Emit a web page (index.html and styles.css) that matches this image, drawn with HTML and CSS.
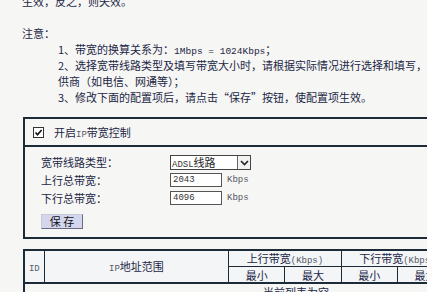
FILE: index.html
```html
<!DOCTYPE html>
<html lang="zh-CN">
<head>
<meta charset="utf-8">
<link rel="stylesheet" href="styles.css">
</head>
<body>
<div class="page">
  <div class="notes">
    <div class="line">生效，反之，则失效。</div>
    <div class="line blank"></div>
    <div class="line">注意：</div>
    <div class="item">1、带宽的换算关系为：<span class="en">1Mbps = 1024Kbps</span>；</div>
    <div class="item">2、选择宽带线路类型及填写带宽大小时，请根据实际情况进行选择和填写，如果有疑问，请联系宽带提</div>
    <div class="item">供商（如电信、网通等）；</div>
    <div class="item">3、修改下面的配置项后，请点击“保存”按钮，使配置项生效。</div>
  </div>

  <div class="box">
    <div class="box-head">
      <span class="check"><svg width="11" height="11" viewBox="0 0 11 11"><rect x="0.5" y="0.5" width="10" height="10" fill="#fff" stroke="#333"/><path d="M2.5 5.5 L4.5 7.8 L8.6 3" fill="none" stroke="#111" stroke-width="1.6"/></svg></span>
      <span class="head-text">开启<span class="en-s">IP</span>带宽控制</span>
    </div>
    <div class="box-body">
      <div class="row">
        <span class="label">宽带线路类型：</span>
        <span class="select"><span class="sel-text"><span class="en-s">ADSL</span>线路</span><span class="sel-arrow"><svg width="9" height="6" viewBox="0 0 9 6"><path d="M1 1 L4.5 4.5 L8 1" fill="none" stroke="#222" stroke-width="1.6"/></svg></span></span>
      </div>
      <div class="row">
        <span class="label">上行总带宽：</span>
        <span class="input">2043</span>
        <span class="unit">Kbps</span>
      </div>
      <div class="row">
        <span class="label">下行总带宽：</span>
        <span class="input">4096</span>
        <span class="unit">Kbps</span>
      </div>
      <div class="btn-row"><span class="btn">保 存</span></div>
    </div>
  </div>

  <table class="grid">
    <colgroup>
      <col class="c-id"><col class="c-ip"><col class="c-n"><col class="c-n"><col class="c-n"><col class="c-n"><col class="c-x"><col class="c-x">
    </colgroup>
    <tr class="top">
      <th rowspan="2"><span class="en-s">ID</span></th>
      <th rowspan="2"><span class="en-s">IP</span>地址范围</th>
      <th colspan="2">上行带宽<span class="en-s">(Kbps)</span></th>
      <th colspan="2">下行带宽<span class="en-s">(Kbps)</span></th>
      <th rowspan="2">启用</th>
      <th rowspan="2">配置</th>
    </tr>
    <tr class="sub">
      <th>最小</th><th>最大</th><th>最小</th><th>最大</th>
    </tr>
    <tr>
      <td colspan="8" class="empty">当前列表为空</td>
    </tr>
  </table>
</div>
</body>
</html>
```
FILE: styles.css
```css
html, body {
  margin: 0;
  padding: 0;
  background: #f6f6f4;
  overflow: hidden;
}
body {
  width: 427px;
  height: 292px;
  font-family: "Noto Sans CJK SC", "Noto Sans", sans-serif;
  font-size: 11px;
  color: #1c2646;
}
.page {
  padding-left: 22px;
  margin-top: -7px;
}
.notes {
  line-height: 16px;
}
.line {
  height: 16px;
  white-space: nowrap;
}
.item {
  height: 16px;
  padding-left: 36px;
  white-space: nowrap;
}
.en {
  font-family: "Liberation Mono", monospace;
  font-size: 9.5px;
  line-height: 1;
}
.en-s {
  font-family: "Liberation Mono", monospace;
  font-size: 9px;
  line-height: 1;
  color: #555a66;
}
.box {
  margin-top: 12px;
  margin-left: 1px;
  width: 430px;
  border: 2px solid #1d2a38;
}
.box-head {
  height: 26px;
  display: flex;
  align-items: center;
  padding-left: 8px;
  border-bottom: 2px solid #1d2a38;
}
.check {
  display: flex;
  width: 11px;
  height: 11px;
  margin-right: 10px;
}
.head-text {
  white-space: nowrap;
}
.box-body {
  padding: 8px 0 8px 16px;
}
.row {
  height: 18px;
  display: flex;
  align-items: flex-start;
}
.label {
  width: 129px;
  line-height: 15px;
  white-space: nowrap;
}
.select {
  width: 79px;
  height: 13px;
  border: 1px solid #444;
  background: #fff;
  display: flex;
  justify-content: space-between;
  align-items: stretch;
}
.sel-text {
  line-height: 13px;
  padding-left: 1px;
  white-space: nowrap;
  color: #222;
}
.sel-text .en-s {
  color: #333;
}
.sel-arrow {
  width: 12px;
  border-left: 1px solid #666;
  background: #f2f2f2;
  display: flex;
  align-items: center;
  justify-content: center;
}
.input {
  width: 48px;
  height: 12px;
  border: 1px solid #555;
  background: #fff;
  font-family: "Liberation Mono", monospace;
  font-size: 9px;
  line-height: 12px;
  padding-left: 2px;
  color: #333;
}
.unit {
  font-family: "Liberation Mono", monospace;
  font-size: 9px;
  color: #555a66;
  margin-left: 5px;
  line-height: 15px;
}
.btn-row {
  display: flex;
  padding-top: 5px;
}
.btn {
  width: 40px;
  height: 13px;
  line-height: 13px;
  text-align: center;
  background: #d4d6ee;
  border: 1px solid #6a6a80;
  border-top-color: #c8c8d8;
  border-left-color: #c8c8d8;
  color: #111;
  font-size: 11px;
}
.grid {
  margin-top: 10px;
  margin-left: 1px;
  width: 546px;
  border-collapse: collapse;
  border: 2px solid #1d2a38;
  table-layout: fixed;
}
.c-id { width: 20px; }
.c-ip { width: 184px; }
.c-n { width: 56px; }
.c-x { width: 57px; }
.grid th {
  border: 1px solid #1d2a38;
  font-weight: normal;
  background: #f3f5f7;
  padding: 0;
  line-height: 14px;
  white-space: nowrap;
  overflow: hidden;
}
.grid .top th {
  height: 14px;
}
.grid .sub th {
  height: 15px;
  border-bottom: 2px solid #1d2a38;
}
.grid th[rowspan] {
  border-bottom: 2px solid #1d2a38;
}
.grid td {
  padding: 0;
  height: 16px;
  line-height: 16px;
  text-align: center;
}
```
